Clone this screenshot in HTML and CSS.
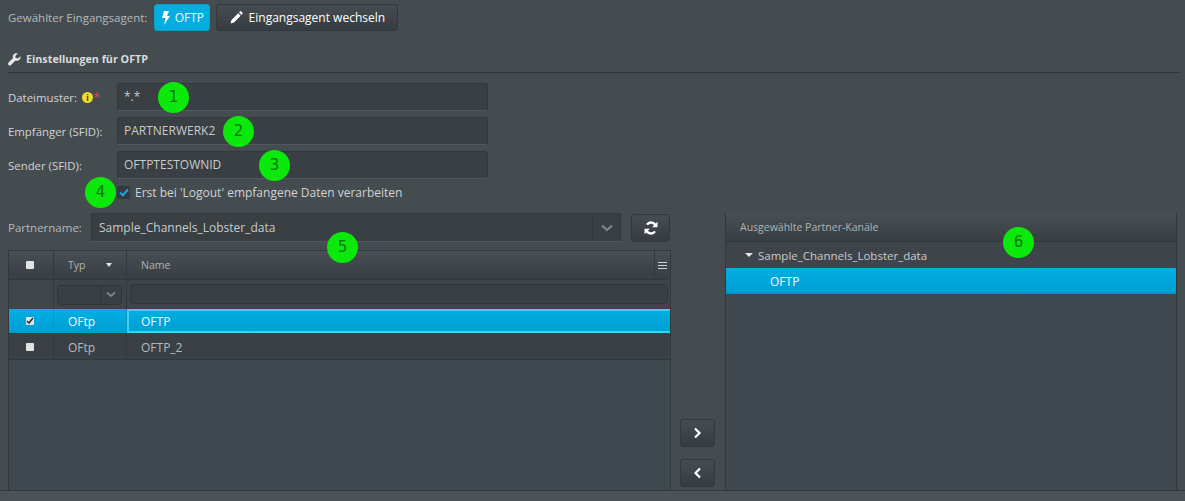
FILE: index.html
```html
<!DOCTYPE html>
<html lang="de">
<head>
<meta charset="utf-8">
<title>Eingangsagent</title>
<link rel="stylesheet" href="styles.css">
</head>
<body>
<div class="page">
  <div class="agent-row">
    <span class="muted agent-label">Gewählter Eingangsagent:</span>
    <span class="btn btn-blue">
      <svg class="ico" width="10" height="14" viewBox="0 0 10 14"><path d="M3 0h5L6 5h3L3 14l1.500-7H1z" fill="#fff"/></svg>OFTP</span>
    <span class="btn btn-change">
      <svg class="ico" width="13" height="13" viewBox="0 0 13 13"><path d="M8.200 2.300l2.500 2.500-6.700 6.700L.5 12.500l1-3.500zM9.100 1.400l.8-.8c.4-.4 1-.4 1.400 0l1.100 1.100c.4.4.4 1 0 1.400l-.8.8z" fill="#fff"/></svg>Eingangsagent wechseln</span>
  </div>

  <div class="section-title">
    <svg width="13" height="13" viewBox="0 0 13 13"><path d="M12.500 3.200L10 5.500 7.800 5 7.300 3 9.800.6C8 0 6 .5 5.200 2c-.6 1-.5 2-.2 3L.6 9.500c-.7.700-.7 1.800 0 2.400.7.700 1.700.7 2.400 0L7.500 7.500c1.400.5 3 .2 4.200-1 .8-.9 1.100-2.100.8-3.300z" fill="#e8e8e8"/></svg>
    Einstellungen für OFTP
  </div>

  <div class="form">
    <div class="form-row">
      <label class="form-label">Dateimuster:<span class="info">i</span><span class="req">*</span></label>
      <div class="field">*.*<span class="marker m1">1</span></div>
    </div>
    <div class="form-row">
      <label class="form-label">Empfänger (SFID):</label>
      <div class="field">PARTNERWERK2<span class="marker m2">2</span></div>
    </div>
    <div class="form-row">
      <label class="form-label">Sender (SFID):</label>
      <div class="field">OFTPTESTOWNID<span class="marker m3">3</span></div>
    </div>
    <div class="check-row">
      <span class="marker m4">4</span>
      <span class="check-box"><svg width="10" height="9" viewBox="0 0 10 9"><path d="M1 4.500L3.800 7.200 9 1.500" fill="none" stroke="#1ea7e0" stroke-width="2"/></svg></span>
      Erst bei 'Logout' empfangene Daten verarbeiten
    </div>
  </div>

  <div class="main">
    <div class="left">
      <div class="partner-row">
        <span class="muted partner-label">Partnername:</span>
        <div class="select">
          <span class="select-text">Sample_Channels_Lobster_data</span>
          <span class="select-arrow"><svg width="12" height="8" viewBox="0 0 12 8"><path d="M1 1.500l5 4.500 5-4.500" fill="none" stroke="#7f8689" stroke-width="2.200"/></svg></span>
          <span class="marker m5">5</span>
        </div>
        <span class="btn btn-refresh">
          <svg width="14" height="14" viewBox="0 0 14 14"><path d="M11.800 5.200A5 5 0 0 0 3 3.600" fill="none" stroke="#fff" stroke-width="2.400"/><path d="M13.500 .8v5.400H8.100z" fill="#fff"/><path d="M2.200 8.800A5 5 0 0 0 11 10.400" fill="none" stroke="#fff" stroke-width="2.400"/><path d="M.5 13.200V7.800h5.400z" fill="#fff"/></svg>
        </span>
      </div>
      <div class="grid">
        <div class="g-row g-head">
          <div class="c-check"><span class="cb"></span></div>
          <div class="c-type">Typ<i class="caret"></i></div>
          <div class="c-name">Name</div>
          <div class="c-menu"><i class="bars"></i></div>
        </div>
        <div class="g-row g-filter">
          <div class="c-check"></div>
          <div class="c-type"><div class="mini-select"><span class="mini-arrow"><svg width="10" height="7" viewBox="0 0 10 7"><path d="M1 1.500l4 3.500 4-3.500" fill="none" stroke="#7f8689" stroke-width="1.800"/></svg></span></div></div>
          <div class="c-filter"><div class="mini-input"></div></div>
        </div>
        <div class="g-row g-selected">
          <div class="c-check"><span class="cb"><svg width="8" height="8" viewBox="0 0 8 8"><path d="M1 4l2 2 4-5" fill="none" stroke="#333" stroke-width="1.600"/></svg></span></div>
          <div class="c-type">OFtp</div>
          <div class="c-name-sel">OFTP</div>
        </div>
        <div class="g-row g-plain">
          <div class="c-check"><span class="cb"></span></div>
          <div class="c-type">OFtp</div>
          <div class="c-name">OFTP_2</div>
        </div>
      </div>
    </div>

    <div class="middle">
      <span class="btn btn-move"><svg width="9" height="12" viewBox="0 0 9 12"><path d="M2 1.500L6.500 6 2 10.500" fill="none" stroke="#fff" stroke-width="2.200"/></svg></span>
      <span class="btn btn-move"><svg width="9" height="12" viewBox="0 0 9 12"><path d="M7 1.500L2.500 6 7 10.500" fill="none" stroke="#fff" stroke-width="2.200"/></svg></span>
    </div>

    <div class="right">
      <div class="r-head">Ausgewählte Partner-Kanäle<span class="marker m6">6</span></div>
      <div class="r-node"><i class="caret caret-node"></i>Sample_Channels_Lobster_data</div>
      <div class="r-leaf">OFTP</div>
    </div>
  </div>
</div>
</body>
</html>
```
FILE: styles.css
```css
* { box-sizing: border-box; }
html, body { margin: 0; height: 100%; }
body {
  background: #4b5356;
  font-family: "Open Sans", "Noto Sans", sans-serif;
  font-size: 12px;
  color: #d4d7d8;
  overflow: hidden;
}
.page { height: 491px; background: #454c50; padding: 0 6px 0 8px; display: flex; flex-direction: column; border-bottom: 1px solid #33383b; }
.muted { color: #b4b9bb; }
.agent-row { display: flex; align-items: center; height: 27px; margin-top: 4px; }
.agent-label { font-size: 11.500px; }
.btn {
  display: inline-flex; align-items: center; justify-content: center;
  background: linear-gradient(#464d52, #363c41);
  border: 1px solid #33383c; border-radius: 3px; color: #fff;
}
.btn-blue { width: 56px; height: 27px; margin-left: 7px; background: #02aee0; border-color: #0f9cc6; gap: 4px; color: #f0f8fb; }
.btn-change { width: 182px; height: 27px; margin-left: 6px; gap: 6px; font-size: 12px; font-weight: 500; }
.ico { flex: none; }
.section-title { margin-top: 19px; height: 23px; display: flex; align-items: flex-start; gap: 5px; font-size: 10.750px; font-weight: 700; color: #d9dcdd; border-bottom: 1px solid #2f3437; line-height: 16px; padding-top: 1px; }
.section-title svg { margin-top: 2px; }
.form { margin-top: 10px; }
.form-row { display: flex; align-items: center; height: 28px; margin-bottom: 6px; }
.form-label { width: 109px; font-size: 11.400px; color: #d0d3d4; display: flex; align-items: center; }
.info { width: 11px; height: 11px; border-radius: 50%; background: #f0dc2a; color: #333; font-size: 8px; font-weight: 700; line-height: 11px; text-align: center; margin-left: 5px; }
.req { color: #d9434a; font-size: 13px; line-height: 11px; }
.field { position: relative; width: 371px; height: 28px; background: #393f42; border: 1px solid #33383b; border-bottom-color: #50585b; border-radius: 3px; padding-left: 6px; line-height: 26px; color: #c8cccd; }
.marker { position: absolute; width: 31px; height: 31px; border-radius: 50%; background: #0be80b; color: #0c730c; font-family: "DejaVu Sans", sans-serif; font-size: 15px; line-height: 31px; text-align: center; font-weight: 400; z-index: 2; }
.m1 { left: 40px; top: -2px; }
.m2 { left: 105px; top: -2px; }
.m3 { left: 141px; top: -2px; }
.m5 { left: 235px; top: 18px; }
.m6 { left: 277px; top: 14px; }
.check-row { position: relative; display: flex; align-items: center; height: 20px; margin-top: -3px; padding-left: 109px; gap: 5px; color: #d0d3d4; }
.check-row .marker { left: 77px; top: -5px; }
.check-box { width: 13px; height: 13px; background: #34393c; border-radius: 2px; display: flex; align-items: center; justify-content: center; }
.main { flex: 1; display: flex; margin-top: 11px; min-height: 0; }
.left { width: 663px; display: flex; flex-direction: column; }
.partner-row { display: flex; align-items: center; height: 29px; }
.partner-label { width: 83px; font-size: 11.500px; }
.select { position: relative; width: 530px; height: 29px; background: #393f42; border: 1px solid #33383b; border-bottom-color: #50585b; border-radius: 3px; display: flex; color: #c8cccd; }
.select-text { flex: 1; padding-left: 7px; line-height: 27px; }
.select-arrow { width: 28px; border-left: 1px solid #33383b; display: flex; align-items: center; justify-content: center; }
.btn-refresh { width: 39px; height: 28px; margin-left: 10px; }
.grid { flex: 1; margin-top: 8px; background: #414950; border: 1px solid #33383b; border-width: 1px 1px 0; display: flex; flex-direction: column; }
.g-row { display: flex; flex: none; }
.c-check { width: 45px; flex: none; display: flex; align-items: center; justify-content: center; padding-right: 2px; border-right: 1px solid #33383b; }
.c-type { width: 73px; flex: none; padding-left: 14px; display: flex; align-items: center; border-right: 1px solid #33383b; }
.c-name { flex: 1; padding-left: 14px; display: flex; align-items: center; }
.g-head { height: 29px; background: linear-gradient(#484f55, #383e42); border-bottom: 1px solid #33383b; color: #aeb3b5; font-size: 10.500px; }
.c-menu { width: 16px; border-left: 1px solid #33383b; display: flex; align-items: center; justify-content: center; }
.bars { width: 9px; height: 7px; border-top: 1px solid #d0d3d4; border-bottom: 1px solid #d0d3d4; position: relative; }
.bars::after { content: ""; position: absolute; left: 0; right: 0; top: 2px; height: 1px; background: #d0d3d4; }
.caret { width: 0; height: 0; border: 3px solid transparent; border-top: 4px solid #e4e6e7; border-bottom: 0; margin-left: 21px; }
.cb { width: 8px; height: 8px; background: #e2e4e4; border-radius: 1px; display: flex; align-items: center; justify-content: center; }
.g-filter { height: 29px; background: #3e444a; }
.g-filter .c-type { padding: 0 3px; }
.g-filter .c-check { background: #3f464b; }
.mini-select { width: 65px; height: 20px; background: #393f42; border: 1px solid #303538; border-radius: 4px; display: flex; justify-content: flex-end; }
.mini-arrow { width: 21px; border-left: 1px solid #303538; display: flex; align-items: center; justify-content: center; }
.c-filter { flex: 1; padding: 4px 2px 0 3px; }
.mini-input { height: 20px; background: #393f42; border: 1px solid #303538; border-radius: 4px; }
.g-selected { height: 24px; background: linear-gradient(#01b0e2, #009cd2); color: #f4fbfd; }
.g-selected .c-check, .g-selected .c-type { border-right-color: #0a95c0; }
.c-name-sel { flex: 1; padding-left: 12px; display: flex; align-items: center; border: 2px solid #42cdf7; border-right: 0; }
.g-plain { height: 27px; padding-top: 2px; background: #3a4045; color: #b4b9bb; border-bottom: 1px solid #33383b; }
.middle { width: 54px; padding: 0 0 3px 9px; display: flex; flex-direction: column; justify-content: flex-end; gap: 12px; }
.btn-move { width: 35px; height: 28px; }
.right { width: 452px; background: #414950; border-left: 1px solid #33383b; border-right: 1px solid #33383b; }
.r-head { position: relative; height: 29px; background: linear-gradient(#484f55, #383e42); border-bottom: 1px solid #33383b; padding-left: 14px; font-size: 10.500px; line-height: 28px; color: #aeb3b5; }
.r-node { height: 26px; background: #3e444a; display: flex; align-items: center; padding-left: 19px; color: #c8cccd; font-size: 11.500px; }
.caret-node { margin: 0 5px 0 0; border-width: 4px 4px 0; }
.r-leaf { height: 26px; background: linear-gradient(#01b0e2, #009cd2); border-bottom: 1px solid #0491bf; color: #f4fbfd; padding-left: 44px; line-height: 27px; }
```
